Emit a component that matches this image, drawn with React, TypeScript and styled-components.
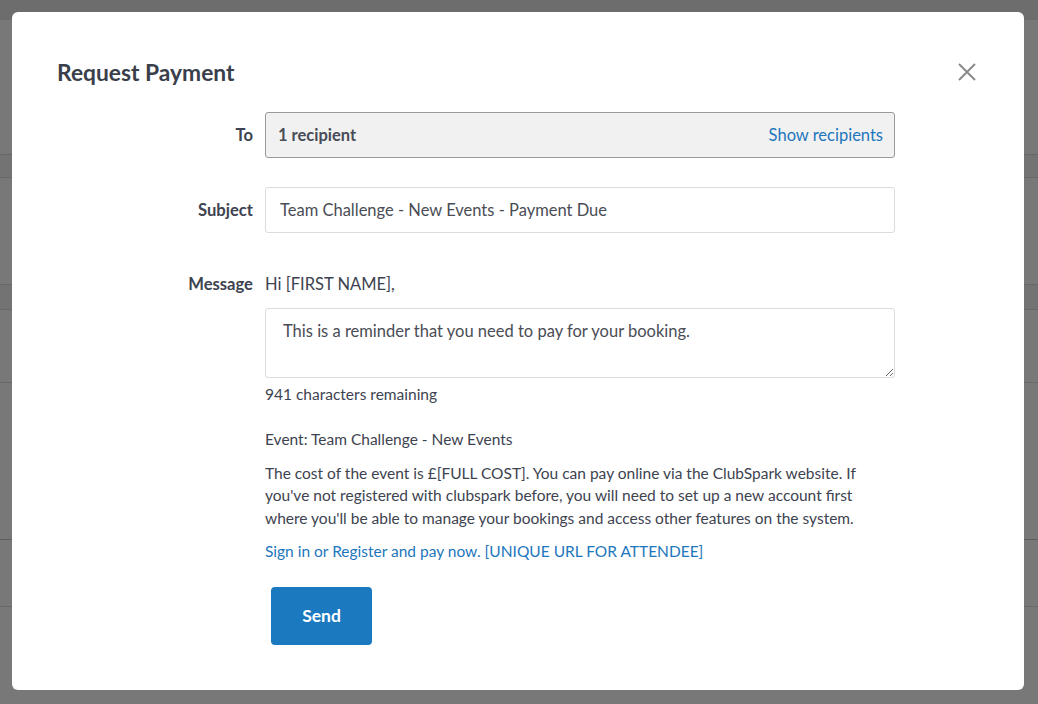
import React, { useState } from "react";
import styled, { createGlobalStyle } from "styled-components";

const GlobalStyle = createGlobalStyle`
  html, body {
    margin: 0;
    padding: 0;
    height: 100%;
  }
  body {
    font-family: Lato, "Open Sans", Arial, sans-serif;
    background: #ffffff;
    overflow: hidden;
  }
`;

const MAX_CHARS = 998;

// page behind the dialog, mostly hidden by it
const Page = styled.div`
  width: 100%;
  height: 704px;
  display: flex;
  flex-direction: column;
  background: #fff;
`;

const TopBar = styled.div`
  height: 20px;
  background: #e8e8e8;
`;

const PageHead = styled.div`
  height: 134px;
  border-bottom: 1px solid #d8d8d8;
`;

const Band = styled.div<{ $height: number; $shade?: boolean; $strong?: boolean }>`
  height: ${(p) => p.$height}px;
  background: ${(p) => (p.$shade ? "#f4f4f4" : "#fff")};
  border-bottom: 1px solid ${(p) => (p.$strong ? "#c8c8c8" : "#dedede")};
`;

const Overlay = styled.div`
  position: fixed;
  inset: 0;
  background: rgba(0, 0, 0, 0.53);
  padding: 12px 14px 14px 12px;
  box-sizing: border-box;
  display: flex;
  align-items: flex-start;
`;

const Dialog = styled.div`
  width: 1012px;
  height: 678px;
  box-sizing: border-box;
  background: #fff;
  border-radius: 6px;
  padding: 44px 45px 45px 45px;
  display: flex;
  flex-direction: column;
  color: #3d4350;
`;

const Header = styled.div`
  display: flex;
  justify-content: space-between;
  align-items: center;
  height: 32px;
  margin-bottom: 24px;
`;

const Title = styled.h2`
  margin: 0;
  font-size: 22.8px;
  font-weight: 700;
  color: #3a3f4b;
`;

const CloseButton = styled.button`
  background: transparent;
  border: none;
  padding: 0;
  margin-right: 1px;
  width: 22px;
  height: 22px;
  cursor: pointer;
  display: flex;
  align-items: center;
  justify-content: center;
`;

const Form = styled.div`
  display: grid;
  grid-template-columns: 196px 630px;
  column-gap: 12px;
  align-items: center;
`;

const Label = styled.div<{ $top?: boolean }>`
  text-align: right;
  font-size: 16.6px;
  font-weight: 700;
  color: #3d4350;
  align-self: ${(p) => (p.$top ? "start" : "center")};
  line-height: 22px;
`;

const Recipients = styled.div`
  height: 46px;
  box-sizing: border-box;
  border: 1px solid #9a9a9a;
  border-radius: 3px;
  background: #f1f1f1;
  display: flex;
  align-items: center;
  justify-content: space-between;
  padding: 0 11px 0 12px;
  font-size: 16.5px;
`;

const RecipientCount = styled.span`
  font-weight: 700;
  color: #474c56;
`;

const LinkText = styled.a<{ $size?: number }>`
  color: #1d76bc;
  text-decoration: none;
  font-size: ${(p) => p.$size ?? 16.5}px;
  cursor: pointer;
`;

const TextInput = styled.input`
  height: 46px;
  box-sizing: border-box;
  width: 100%;
  border: 1px solid #dcdcdc;
  border-radius: 3px;
  padding: 0 14px;
  font-family: inherit;
  font-size: 16.5px;
  color: #4a4d55;
  outline: none;
`;

const Spacer = styled.div<{ $h: number }>`
  grid-column: 1 / -1;
  height: ${(p) => p.$h}px;
`;

const MessageColumn = styled.div`
  display: flex;
  flex-direction: column;
  font-size: 16.5px;
`;

const Greeting = styled.div`
  line-height: 22px;
  color: #3d4350;
  margin-bottom: 13px;
`;

const TextArea = styled.textarea`
  width: 100%;
  height: 70px;
  box-sizing: border-box;
  border: 1px solid #dcdcdc;
  border-radius: 3px;
  padding: 11px 17px;
  font-family: inherit;
  font-size: 16.5px;
  line-height: 22px;
  color: #4a4d55;
  resize: vertical;
  outline: none;
  display: block;
`;

const Counter = styled.div`
  font-size: 15.5px;
  line-height: 20px;
  margin-top: 6px;
  color: #3d4350;
`;

const Note = styled.p<{ $gap: number }>`
  margin: ${(p) => p.$gap}px 0 0;
  font-size: 15.5px;
  line-height: 22.5px;
  max-width: 600px;
  color: #3d4350;
`;

const SendButton = styled.button`
  margin: 24px 0 0 6px;
  width: 101px;
  height: 58px;
  border: none;
  border-radius: 4px;
  background: #1b7abf;
  color: #fff;
  font-family: inherit;
  font-size: 17.5px;
  font-weight: 700;
  cursor: pointer;
  align-self: flex-start;
`;

const CloseIcon = () => (
  <svg width="20" height="20" viewBox="0 0 20 20">
    <path d="M2 2 L18 18 M18 2 L2 18" stroke="#8a8a8a" strokeWidth="2" />
  </svg>
);

const App: React.FC = () => {
  const [subject, setSubject] = useState("Team Challenge - New Events - Payment Due");
  const [message, setMessage] = useState("This is a reminder that you need to pay for your booking.");

  return (
    <>
      <GlobalStyle />
      <Page>
        <TopBar />
        <PageHead />
        <Band $height={22} $shade />
        <Band $height={106} />
        <Band $height={24} $shade />
        <Band $height={72} />
        <Band $height={156} $strong />
        <Band $height={66} />
      </Page>
      <Overlay>
        <Dialog>
          <Header>
            <Title>Request Payment</Title>
            <CloseButton aria-label="Close">
              <CloseIcon />
            </CloseButton>
          </Header>
          <Form>
            <Label>To</Label>
            <Recipients>
              <RecipientCount>1 recipient</RecipientCount>
              <LinkText>Show recipients</LinkText>
            </Recipients>
            <Spacer $h={29} />
            <Label>Subject</Label>
            <TextInput value={subject} onChange={(e) => setSubject(e.target.value)} />
            <Spacer $h={40} />
            <Label $top>Message</Label>
            <MessageColumn>
              <Greeting>Hi [FIRST NAME],</Greeting>
              <TextArea value={message} onChange={(e) => setMessage(e.target.value)} />
              <Counter>{MAX_CHARS - message.length} characters remaining</Counter>
              <Note $gap={24}>Event: Team Challenge - New Events</Note>
              <Note $gap={11}>
                The cost of the event is £[FULL COST]. You can pay online via the ClubSpark website. If
                you've not registered with clubspark before, you will need to set up a new account first
                where you'll be able to manage your bookings and access other features on the system.
              </Note>
              <Note $gap={11}>
                <LinkText $size={15.5}>Sign in or Register and pay now. [UNIQUE URL FOR ATTENDEE]</LinkText>
              </Note>
              <SendButton>Send</SendButton>
            </MessageColumn>
          </Form>
        </Dialog>
      </Overlay>
    </>
  );
};

export default App;
